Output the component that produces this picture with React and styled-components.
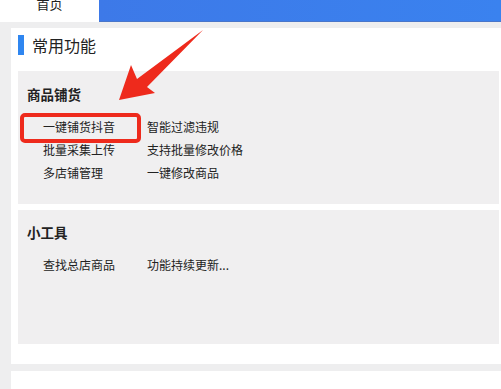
import React from "react";
import styled, { createGlobalStyle } from "styled-components";

const Global = createGlobalStyle`
  html, body { margin: 0; padding: 0; background: #eeeeef; }
  body { font-family: "Noto Sans CJK SC", "Noto Sans", sans-serif; color: #222; overflow: hidden; }
`;

const Page = styled.div`
  position: relative;
  width: 501px;
  height: 389px;
  overflow: hidden;
`;

const Header = styled.div`
  display: flex;
  height: 22px;
`;

const Tab = styled.div`
  width: 99px;
  background: #ffffff;
  display: flex;
  align-items: flex-end;
  justify-content: center;
  padding-bottom: 12px;
  box-sizing: border-box;
  overflow: hidden;
  font-size: 13px;
  line-height: 13px;
  color: #222;
`;

const BlueBar = styled.div`
  flex: 1;
  background: linear-gradient(90deg, #3d79e8, #3a82ef);
  border-bottom: 1px solid #4a76c9;
`;

const Panel = styled.div`
  margin: 6px 0 0 11px;
  background: #fff;
  padding: 7px 2px 20px 7px;
`;

const Title = styled.div`
  display: flex;
  align-items: center;
  gap: 8px;
  height: 20px;
  font-size: 16px;
  color: #222;
  margin-bottom: 16px;
`;

const Accent = styled.span`
  width: 6px;
  height: 20px;
  background: #2f86f0;
`;

const Card = styled.div`
  background: #f0eff0;
  height: ${(p) => p.$h}px;
  box-sizing: border-box;
  padding: ${(p) => p.$pt}px 0 0 9px;
  & + & { margin-top: 6px; }
`;

const CardTitle = styled.div`
  font-size: 13.5px;
  font-weight: bold;
  line-height: 18px;
`;

const Items = styled.div`
  display: grid;
  grid-template-columns: 104px 120px;
  padding: ${(p) => p.$pt}px 0 0 16px;
  font-size: 12px;
  line-height: 23px;
  color: #222;
`;

const NextPanel = styled.div`
  margin: 7px 0 0 11px;
  background: #fff;
  height: 30px;
`;

const Highlight = styled.div`
  position: absolute;
  left: 20px;
  top: 113px;
  width: 121px;
  height: 30px;
  box-sizing: border-box;
  border: 4px solid #ee2a1c;
  border-radius: 5px;
`;

const ArrowSvg = styled.svg`
  position: absolute;
  left: 0;
  top: 0;
`;

export default function App() {
  return (
    <Page>
      <Global />
      <Header>
        <Tab>首页</Tab>
        <BlueBar />
      </Header>
      <Panel>
        <Title>
          <Accent />
          常用功能
        </Title>
        <Card $h={133} $pt={14}>
          <CardTitle>商品铺货</CardTitle>
          <Items $pt={12}>
            <span>一键铺货抖音</span>
            <span>智能过滤违规</span>
            <span>批量采集上传</span>
            <span>支持批量修改价格</span>
            <span>多店铺管理</span>
            <span>一键修改商品</span>
          </Items>
        </Card>
        <Card $h={134} $pt={13}>
          <CardTitle>小工具</CardTitle>
          <Items $pt={12}>
            <span>查找总店商品</span>
            <span>功能持续更新...</span>
          </Items>
        </Card>
      </Panel>
      <NextPanel />
      <Highlight />
      <ArrowSvg width="501" height="389" viewBox="0 0 501 389">
        <polygon
          points="203,30 147,87 155,93 119,100 131,65 137,79"
          fill="#ee2a1c"
        />
      </ArrowSvg>
    </Page>
  );
}
